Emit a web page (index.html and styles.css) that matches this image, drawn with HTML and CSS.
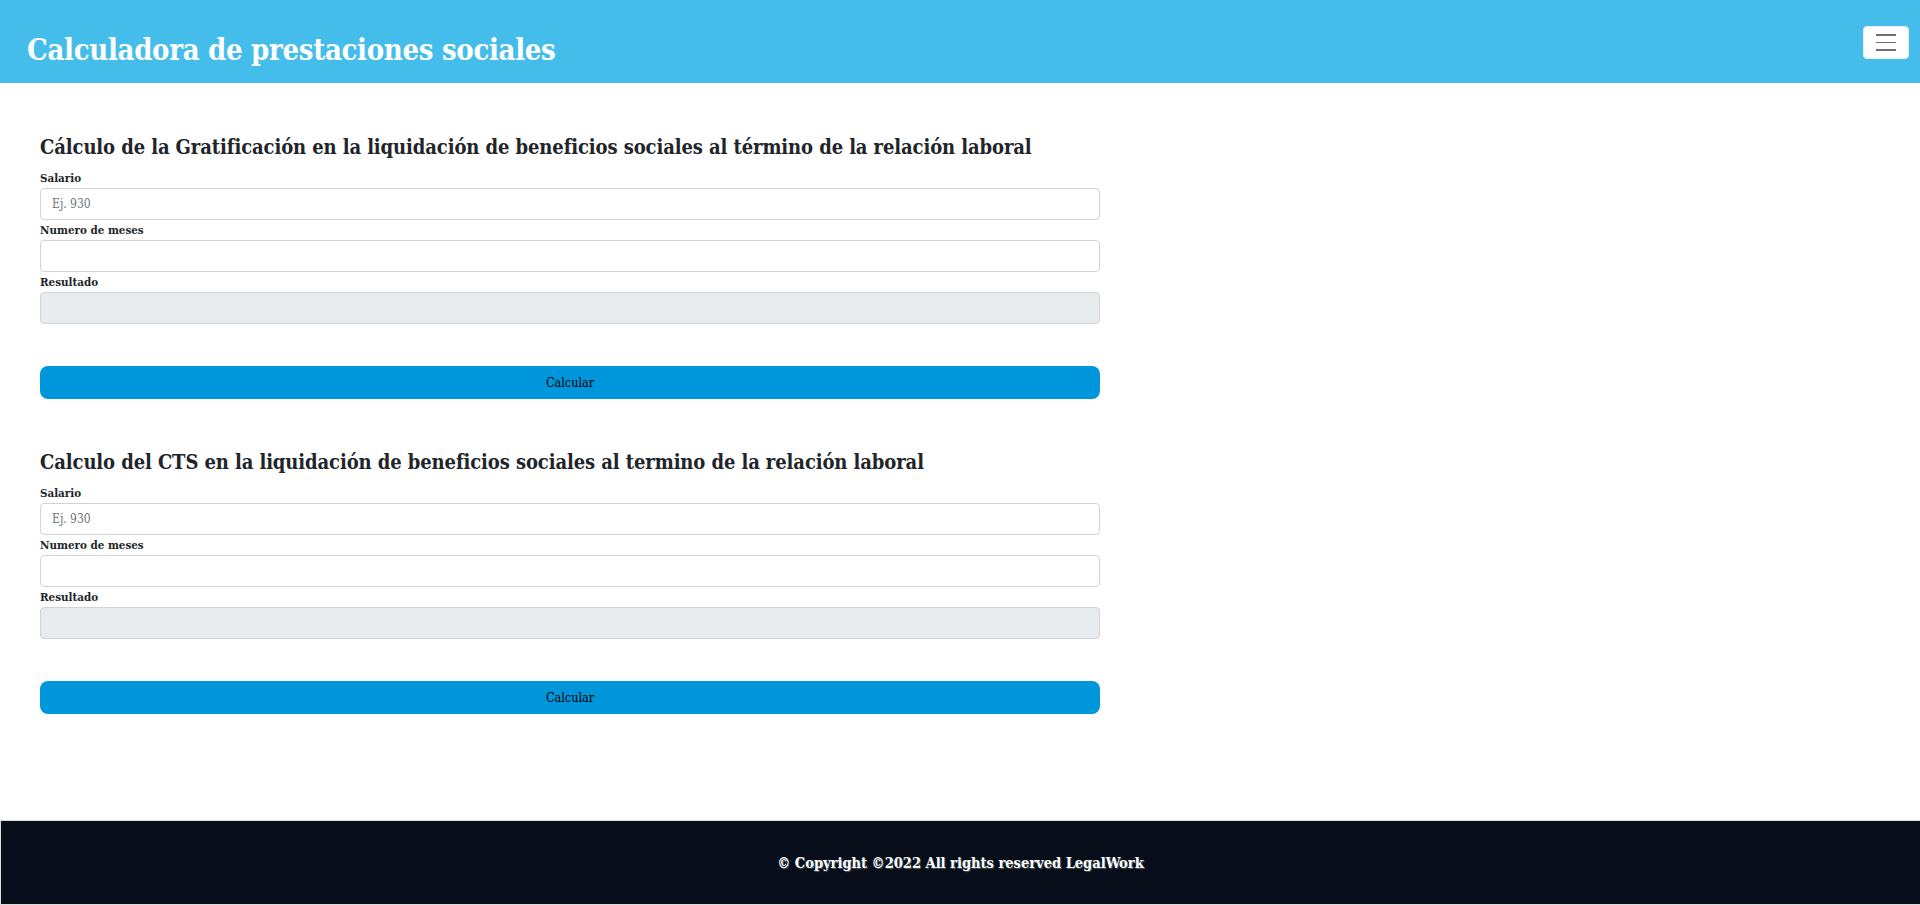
FILE: index.html
```html
<!DOCTYPE html>
<html lang="es">
<head>
<meta charset="utf-8">
<title>Calculadora de prestaciones sociales</title>
<link rel="stylesheet" href="styles.css">
</head>
<body>
<header class="topbar">
  <h1 class="brand">Calculadora de prestaciones sociales</h1>
  <button class="toggler" type="button" aria-label="Menu">
    <span class="toggler-line"></span>
    <span class="toggler-line"></span>
    <span class="toggler-line"></span>
  </button>
</header>
<main class="content">
  <section class="calc">
    <h4 class="calc-title">Cálculo de la Gratificación en la liquidación de beneficios sociales al término de la relación laboral</h4>
    <label class="field-label">Salario</label>
    <input class="field" type="text" placeholder="Ej. 930">
    <label class="field-label">Numero de meses</label>
    <input class="field" type="text">
    <label class="field-label">Resultado</label>
    <input class="field field-disabled" type="text" disabled>
    <button class="calc-btn" type="button">Calcular</button>
  </section>
  <section class="calc">
    <h4 class="calc-title">Calculo del CTS en la liquidación de beneficios sociales al termino de la relación laboral</h4>
    <label class="field-label">Salario</label>
    <input class="field" type="text" placeholder="Ej. 930">
    <label class="field-label">Numero de meses</label>
    <input class="field" type="text">
    <label class="field-label">Resultado</label>
    <input class="field field-disabled" type="text" disabled>
    <button class="calc-btn" type="button">Calcular</button>
  </section>
</main>
<footer class="footer">
  <p class="footer-text">© Copyright ©2022 All rights reserved LegalWork</p>
</footer>
</body>
</html>
```
FILE: styles.css
```css
* { box-sizing: border-box; }
html, body { margin: 0; padding: 0; }
body {
  font-family: "DejaVu Serif", "Liberation Serif", serif;
  font-stretch: condensed;
  color: #212529;
  background: #fff;
  min-height: 100vh;
  display: flex;
  flex-direction: column;
}
.topbar {
  height: 83px;
  background: #44bdeb;
  display: flex;
  align-items: center;
  justify-content: space-between;
  padding: 0 11px 0 27px;
}
.brand {
  margin: 17px 0 0;
  color: #fff;
  font-size: 29px;
  font-weight: 700;
  line-height: 1.2;
  letter-spacing: -0.3px;
}
.toggler {
  width: 46px;
  height: 33px;
  margin-top: 2px;
  background: #fff;
  border: 1px solid #e6eef2;
  border-radius: 4px;
  display: flex;
  flex-direction: column;
  align-items: center;
  justify-content: center;
  gap: 6px;
  padding: 0;
}
.toggler-line {
  display: block;
  width: 20px;
  height: 1.5px;
  background: #6f6f6f;
}
.content {
  flex: 1;
  padding: 50px 0 0 40px;
}
.calc {
  width: 1060px;
  display: flex;
  flex-direction: column;
  margin-bottom: 49px;
}
.calc-title {
  margin: 0 0 6px;
  font-size: 20px;
  font-weight: 700;
  line-height: 29px;
  letter-spacing: -0.1px;
  color: #212529;
}
.field-label {
  font-size: 11.5px;
  font-weight: 700;
  line-height: 20px;
  height: 20px;
  color: #212529;
}
.field {
  height: 32px;
  width: 100%;
  border: 1px solid #ced4da;
  border-radius: 4px;
  padding: 0 11px;
  font-family: inherit;
  font-stretch: condensed;
  font-size: 12px;
  color: #212529;
  background: #fff;
}
.field::placeholder { color: #6c757d; }
.field-disabled { background: #e9ecef; }
.calc-btn {
  margin-top: 42px;
  height: 33px;
  width: 100%;
  border: none;
  border-radius: 8px;
  background: #0096db;
  color: #000;
  font-family: inherit;
  font-stretch: condensed;
  font-size: 12.5px;
  font-weight: 400;
}
.footer {
  height: 85px;
  background: #070d19;
  border: 1px solid #dcdcdc;
  border-right: none;
  display: flex;
  align-items: center;
  justify-content: center;
}
.footer-text {
  margin: 0;
  color: #fff;
  font-size: 14.5px;
  font-weight: 700;
  text-shadow: 1px 1px 1px #555;
}
```
